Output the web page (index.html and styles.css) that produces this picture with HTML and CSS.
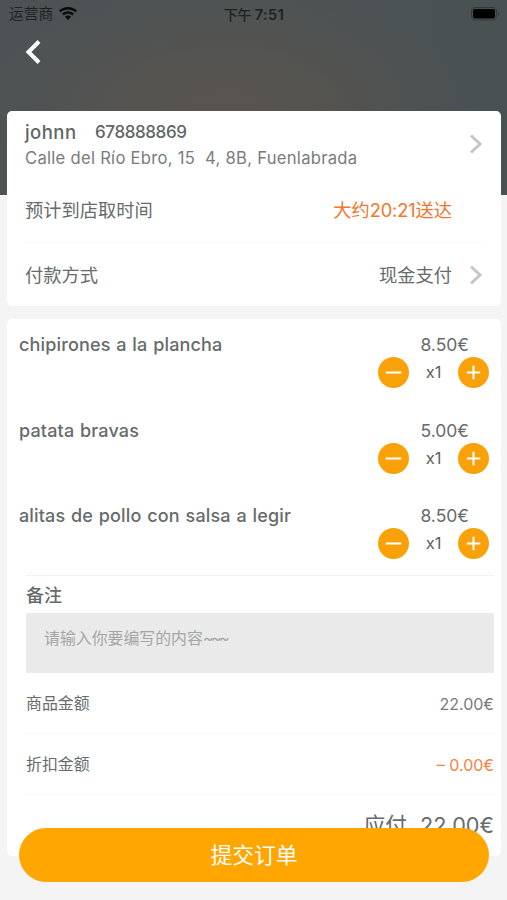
FILE: index.html
```html
<!DOCTYPE html>
<html lang="zh-CN">
<head>
<meta charset="utf-8">
<meta name="viewport" content="width=device-width, initial-scale=1">
<title>提交订单</title>
<link rel="stylesheet" href="styles.css">
</head>
<body>
<div class="screen">
  <header class="hero">
    <div class="status">
      <div class="carrier">
        <span>运营商</span>
        <svg class="wifi" viewBox="0 0 18 14" width="18" height="14"><path d="M9 0C5.5 0 2.4 1.3 0 3.5l1.7 1.8C3.600 3.500 6.200 2.500 9 2.500s5.400 1 7.300 2.800L18 3.500C15.600 1.300 12.500 0 9 0zM9 4.300c-2.300 0-4.400.9-5.900 2.300l1.700 1.800C5.900 7.300 7.400 6.700 9 6.700s3.100.6 4.200 1.700l1.700-1.800C13.400 5.200 11.300 4.300 9 4.300zM9 8.500c-1.200 0-2.300.4-3.100 1.200L9 13l3.100-3.300C11.300 8.900 10.200 8.500 9 8.500z"/></svg>
      </div>
      <div class="clock"><span>下午</span><b>7:51</b></div>
      <svg class="battery" viewBox="0 0 29 14" width="29" height="14"><rect x="0.500" y="0.500" width="25" height="12.500" rx="3.500" fill="none" stroke="#343a3b"/><rect x="2" y="2" width="22" height="9.500" rx="2" fill="#000"/><path d="M27 5v4c1.500-.5 1.500-3.500 0-4z" fill="#2b3031"/></svg>
    </div>
    <svg class="back" viewBox="0 0 18 26" width="18" height="26"><path d="M15 2.500L4.500 13 15 23.500" fill="none" stroke="#fff" stroke-width="4"/></svg>
  </header>

  <main class="content">
    <section class="card info">
      <div class="address">
        <div>
          <div class="person"><span class="name">johnn</span><span class="phone">678888869</span></div>
          <div class="street">Calle del Río Ebro, 15&nbsp; 4, 8B, Fuenlabrada</div>
        </div>
        <svg class="chevron" viewBox="0 0 14 20" width="14" height="20"><path d="M2 1.500L11 10l-9 8.500"/></svg>
      </div>
      <div class="row arrival"><span>预计到店取时间</span><span class="eta">大约<i>20:21</i>送达</span></div>
      <div class="row payment"><span>付款方式</span><span class="method">现金支付</span>
        <svg class="chevron" viewBox="0 0 14 20" width="14" height="20"><path d="M2 1.500L11 10l-9 8.500"/></svg>
      </div>
    </section>

    <section class="card order">
      <div class="item">
        <div class="dish">chipirones a la plancha</div>
        <div class="buy"><div class="price">8.50€</div>
          <div class="stepper">
            <svg viewBox="0 0 30 30" width="31" height="31"><circle cx="15" cy="15" r="15"/><path d="M7.500 15h15"/></svg><span>x1</span>
            <svg viewBox="0 0 30 30" width="31" height="31"><circle cx="15" cy="15" r="15"/><path d="M8.500 15h13M15 8.500v13"/></svg>
          </div></div>
      </div>
      <div class="item">
        <div class="dish">patata bravas</div>
        <div class="buy"><div class="price">5.00€</div>
          <div class="stepper">
            <svg viewBox="0 0 30 30" width="31" height="31"><circle cx="15" cy="15" r="15"/><path d="M7.500 15h15"/></svg><span>x1</span>
            <svg viewBox="0 0 30 30" width="31" height="31"><circle cx="15" cy="15" r="15"/><path d="M8.500 15h13M15 8.500v13"/></svg>
          </div></div>
      </div>
      <div class="item">
        <div class="dish">alitas de pollo con salsa a legir</div>
        <div class="buy"><div class="price">8.50€</div>
          <div class="stepper">
            <svg viewBox="0 0 30 30" width="31" height="31"><circle cx="15" cy="15" r="15"/><path d="M7.500 15h15"/></svg><span>x1</span>
            <svg viewBox="0 0 30 30" width="31" height="31"><circle cx="15" cy="15" r="15"/><path d="M8.500 15h13M15 8.500v13"/></svg>
          </div></div>
      </div>
      <div class="details">
        <div class="note-title">备注</div>
        <div class="note">请输入你要编写的内容<span class="tildes">~~~</span></div>
        <div class="sum"><span>商品金额</span><span class="amount">22.00€</span></div>
        <div class="sum"><span>折扣金额</span><span class="amount discount">– 0.00€</span></div>
        <div class="total"><span>应付</span><span class="due">22.00€</span></div>
      </div>
    </section>
  </main>
  <button class="submit">提交订单</button>
</div>
</body>
</html>
```
FILE: styles.css
```css
* { box-sizing: border-box; }
body {
  margin: 0;
  background: #f4f4f4;
  color: #666b6b;
  font-family: Inter, "Noto Sans CJK SC", sans-serif;
}
.screen { position: relative; width: 507px; height: 900px; overflow: hidden; }
.hero {
  height: 195px;
  background:
    radial-gradient(ellipse 250px 110px at 225px 105px, #59544f 0%, rgba(88, 83, 78, 0) 100%),
    linear-gradient(90deg, #4d5355, #4e5353 50%, #495153);
}
.status {
  display: grid;
  grid-template-columns: 1fr auto 1fr;
  align-items: center;
  height: 27px;
  padding: 0 6px 0 9px;
  color: #1d2223;
}
.carrier { display: flex; align-items: center; gap: 6px; font-size: 14.7px; line-height: 28px; }
.wifi { fill: #080a0a; }
.clock { display: flex; gap: 3px; margin-left: -2px; font-size: 14px; line-height: 27px; font-weight: 500; }
.clock b { font-weight: 600; font-size: 14.500px; letter-spacing: 0.5px; }
.battery { justify-self: end; margin-right: 1px; }
.back { display: block; margin: 12px 0 0 24px; }
.content { margin-top: -84px; padding: 0 6px 0 7px; }
.card { background: #fff; border-radius: 5px; }
.info { height: 195px; margin-bottom: 13px; padding: 0 18px; }
.address { display: flex; justify-content: space-between; height: 66px; }
.person { display: flex; height: 34px; padding-top: 8px; line-height: 26px; font-weight: 500; color: #5f6565; }
.name { width: 70px; font-size: 18.500px; letter-spacing: 0.45px; }
.phone { font-size: 17px; letter-spacing: -0.4px; }
.street { font-size: 16.600px; line-height: 26px; color: #777c7c; white-space: nowrap; letter-spacing: 0.28px; }
.chevron { flex: none; fill: none; stroke: #c5c7c7; stroke-width: 3; }
.address .chevron { margin-top: 23px; }
.row { display: flex; align-items: center; font-size: 18.250px; }
.row span:first-child { flex: 1; }
.arrival { height: 66px; padding: 0 31px 2px 0; border-bottom: 1px solid #fafafa; }
.payment { height: 63px; }
.payment span { margin-top: -2px; }
.eta { color: #f5742b; }
.eta i { font-style: normal; letter-spacing: -0.15px; }
.method { margin-right: 17px; }
.order { height: 537px; }
.item { display: flex; justify-content: space-between; height: 85.500px; padding: 14px 12px 0; }
.dish { font-size: 18px; line-height: 24px; font-weight: 500; letter-spacing: 0.15px; word-spacing: 0.8px; }
.buy { display: flex; flex-direction: column; width: 111px; }
.price { align-self: flex-end; margin-right: 20px; font-size: 17.500px; line-height: 24px; }
.stepper { display: flex; justify-content: space-between; align-items: center; font-size: 16.500px; line-height: 31px; }
.stepper span { color: #5c6161; }
.stepper svg { fill: #f9a109; stroke: #fff; stroke-width: 2; }
.stepper circle { stroke: none; }
.details { margin-top: -1px; padding: 0 7px 0 19px; }
.note-title { height: 38px; border-top: 1px solid #f2f2f2; font-size: 18px; line-height: 39px; font-weight: 500; }
.note { height: 60px; padding: 0 18px; background: #eaeaea; color: #a3a6a6; font-size: 15.900px; line-height: 51px; }
.tildes { letter-spacing: -2.500px; }
.sum { display: flex; justify-content: space-between; height: 61px; border-bottom: 1px solid #fafafa; font-size: 15.900px; line-height: 62px; }
.amount { font-size: 16px; color: #777b7b; }
.amount.discount { color: #f58345; }
.total { display: flex; justify-content: flex-end; gap: 13px; font-size: 21.700px; line-height: 60px; }
.submit {
  position: absolute;
  left: 19px;
  top: 828px;
  width: 470px;
  height: 54px;
  padding: 0 0 2px;
  border: 0;
  border-radius: 27px;
  background: #ffa600;
  color: #fff;
  font: 400 21.800px/52px "Noto Sans CJK SC", sans-serif;
}
```
